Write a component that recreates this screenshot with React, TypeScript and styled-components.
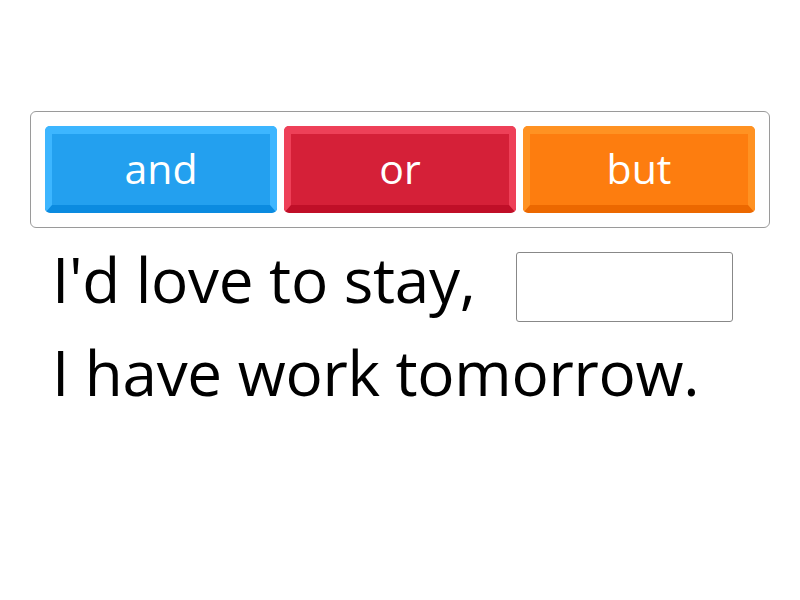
import styled, { createGlobalStyle } from 'styled-components';

type Tone = 'blue' | 'red' | 'orange';

const tones: Record<Tone, { face: string; light: string; dark: string }> = {
  blue: { face: '#23a0ef', light: '#3db6ff', dark: '#0b8be0' },
  red: { face: '#d52038', light: '#ee4058', dark: '#c00f28' },
  orange: { face: '#fd7d0f', light: '#ff9222', dark: '#ec6800' },
};

const options: { label: string; tone: Tone }[] = [
  { label: 'and', tone: 'blue' },
  { label: 'or', tone: 'red' },
  { label: 'but', tone: 'orange' },
];

const App: React.FC = () => {
  return (
    <>
      <GlobalStyle />
      <Page>
        <Tray>
          {options.map((o) => (
            <Tile key={o.label} $tone={o.tone}>
              {o.label}
            </Tile>
          ))}
        </Tray>
        <Sentence>
          <Words>I'd love to stay,</Words>
          <Blank />
          <Words>I have work tomorrow.</Words>
        </Sentence>
      </Page>
    </>
  );
};

export default App;

const GlobalStyle = createGlobalStyle`
  html, body {
    margin: 0;
    padding: 0;
    background: #ffffff;
  }
  body {
    font-family: 'Open Sans', 'Noto Sans', sans-serif;
  }
`;

const Page = styled.div`
  width: 800px;
  height: 600px;
  padding: 111px 30px 0;
  box-sizing: border-box;
  display: flex;
  flex-direction: column;
`;

const Tray = styled.div`
  display: grid;
  grid-template-columns: repeat(3, 1fr);
  gap: 7px;
  padding: 14px 14px 14px;
  border: 1px solid #9a9a9a;
  border-radius: 6px;
  background: #ffffff;
`;

const Tile = styled.div<{ $tone: Tone }>`
  height: 87px;
  box-sizing: border-box;
  display: flex;
  align-items: center;
  justify-content: center;
  border-style: solid;
  border-width: 8px 7px 8px 7px;
  border-color: ${({ $tone }) =>
    `${tones[$tone].light} ${tones[$tone].light} ${tones[$tone].dark} ${tones[$tone].light}`};
  border-radius: 5px;
  background: ${({ $tone }) => tones[$tone].face};
  color: #ffffff;
  font-size: 41px;
  line-height: 1;
  padding-bottom: 3px;
  cursor: pointer;
`;

const Sentence = styled.div`
  display: flex;
  flex-wrap: wrap;
  align-items: flex-start;
  column-gap: 41px;
  margin-top: 5px;
  padding-left: 22px;
`;

const Words = styled.span`
  font-size: 62px;
  line-height: 93px;
  letter-spacing: -0.3px;
  color: #000000;
  white-space: nowrap;
`;

const Blank = styled.div`
  width: 217px;
  height: 70px;
  margin-top: 19px;
  box-sizing: border-box;
  border: 1px solid #888888;
  border-radius: 3px;
  background: #ffffff;
`;
